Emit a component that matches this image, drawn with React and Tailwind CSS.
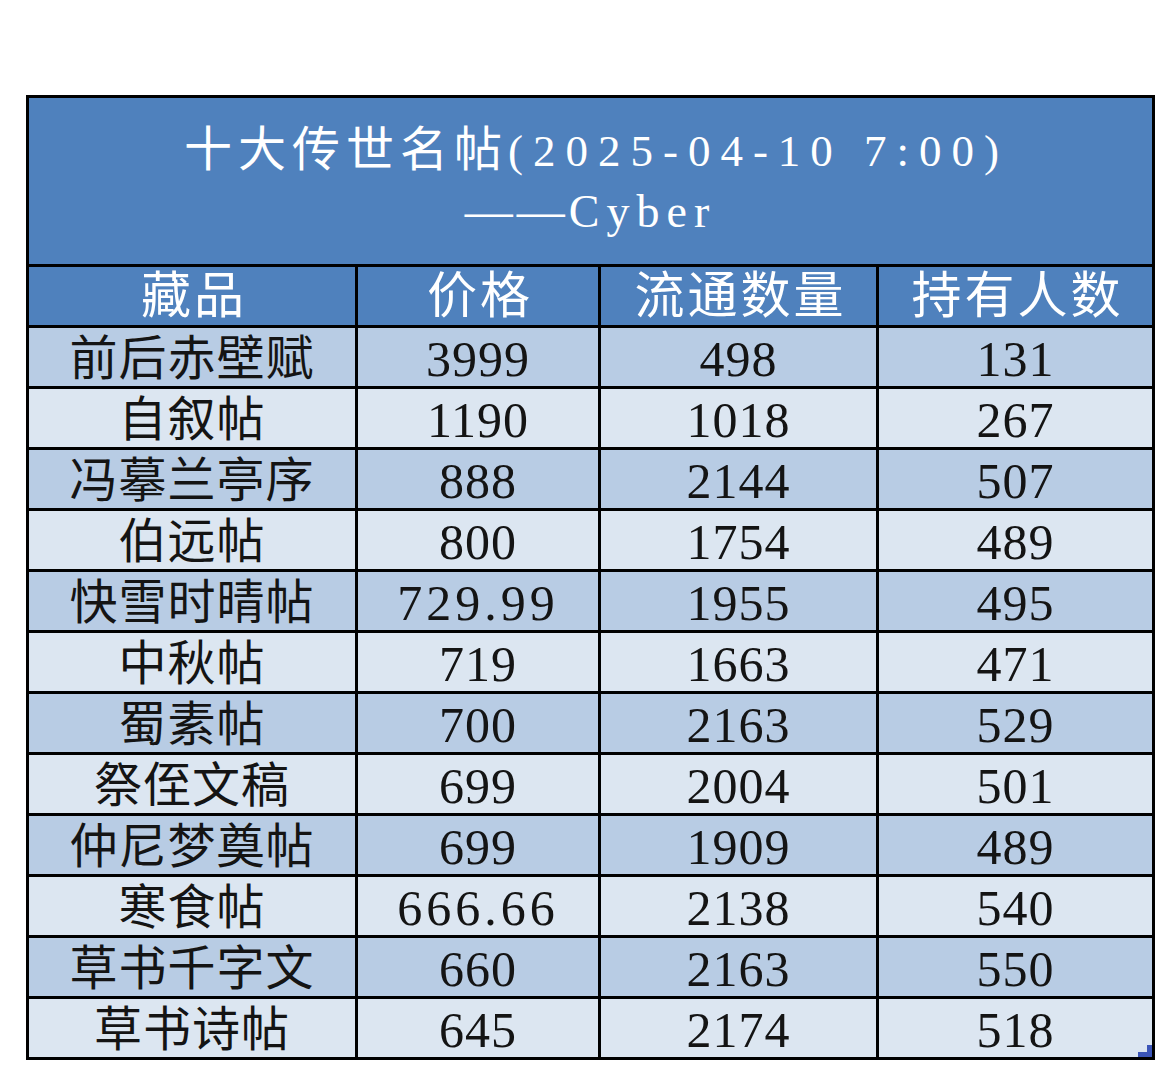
import React from 'react';

const ROWS = [
  ['前后赤壁赋', '3999', '498', '131'],
  ['自叙帖', '1190', '1018', '267'],
  ['冯摹兰亭序', '888', '2144', '507'],
  ['伯远帖', '800', '1754', '489'],
  ['快雪时晴帖', '729.99', '1955', '495'],
  ['中秋帖', '719', '1663', '471'],
  ['蜀素帖', '700', '2163', '529'],
  ['祭侄文稿', '699', '2004', '501'],
  ['仲尼梦奠帖', '699', '1909', '489'],
  ['寒食帖', '666.66', '2138', '540'],
  ['草书千字文', '660', '2163', '550'],
  ['草书诗帖', '645', '2174', '518'],
];

const HEADERS = ['藏品', '价格', '流通数量', '持有人数'];

const FONT = "font-['Liberation_Serif','Noto_Sans_CJK_SC',serif]";

// Excel-ish table screenshot: blue title band, banded rows, thick black grid.
export default function App() {
  return (
    <div className={`min-h-[1080px] w-[1170px] bg-white pt-[95px] pl-[26px] ${FONT}`}>
      <div className="w-[1129px] border-[3px] border-black">
        <div className="flex h-[166px] flex-col items-center justify-center bg-[#4f81bd] text-white">
          <div className="flex items-baseline pl-[12px] leading-[60px]">
            <span className="text-[48px] tracking-[6px]">十大传世名帖</span>
            <span className="text-[45px] tracking-[10px]">(2025-04-10 7:00)</span>
          </div>
          <div className="flex items-baseline leading-[60px]">
            <span className="text-[48px] tracking-[4px]">——</span>
            <span className="text-[46px] tracking-[7px]">Cyber</span>
          </div>
        </div>

        <div className="grid h-[61px] grid-cols-[326px_243px_278px_276px] border-t-[3px] border-black bg-[#4f81bd] text-white">
          {HEADERS.map((h, i) => (
            <div
              key={h}
              className={`flex items-center justify-center pl-[4px] text-[50px] leading-none tracking-[3px] ${i > 0 ? 'border-l-[3px] border-black' : ''}`}
            >
              {h}
            </div>
          ))}
        </div>

        {ROWS.map((row, r) => (
          <div
            key={r}
            className={`grid h-[61px] grid-cols-[326px_243px_278px_276px] border-t-[3px] border-black text-[#141414] ${
              r % 2 === 0 ? 'bg-[#b8cce4]' : 'bg-[#dce6f1]'
            }`}
          >
            {row.map((cell, i) => (
              <div
                key={i}
                className={`relative flex items-center justify-center pt-[4px] leading-none ${
                  i === 0 ? 'text-[48px] tracking-[1px]' : i === 1 && cell.includes('.') ? 'text-[50px] tracking-[4px]' : 'text-[50px] tracking-[1px]'
                } ${i > 0 ? 'border-l-[3px] border-black' : ''}`}
              >
                {cell}
                {r === ROWS.length - 1 && i === 3 && (
                  <>
                    <div className="absolute right-0 bottom-0 h-[12px] w-[5px] bg-[#3b55b8]" />
                    <div className="absolute right-0 bottom-0 h-[5px] w-[14px] bg-[#3b55b8]" />
                  </>
                )}
              </div>
            ))}
          </div>
        ))}
      </div>
    </div>
  );
}
